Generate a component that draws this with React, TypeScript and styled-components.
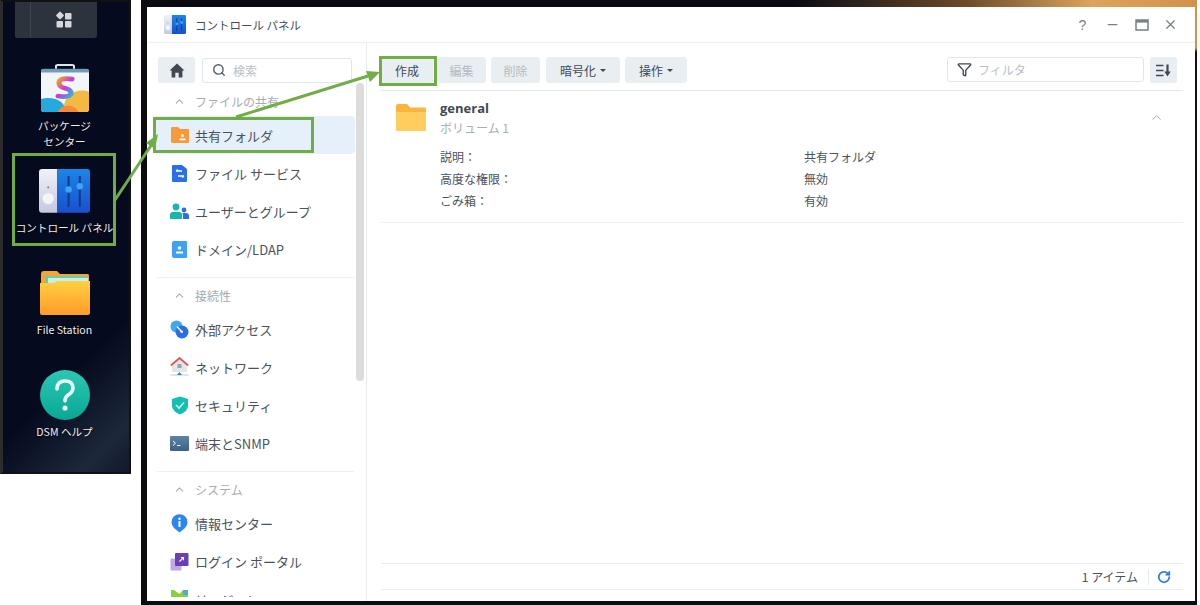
import React from 'react';
import styled, { createGlobalStyle } from 'styled-components';
import { ChevronUp, Search, Funnel, RotateCw, X, Minus } from 'lucide-react';

const GlobalStyle = createGlobalStyle`
  html, body { margin: 0; padding: 0; background: #fff; }
  body { font-family: "Noto Sans CJK JP", "Liberation Sans", sans-serif; }
  * { box-sizing: border-box; }
`;

const JP = `"Noto Sans CJK JP", "Liberation Sans", sans-serif`;

const Page = styled.div`
  position: relative;
  width: 1200px;
  height: 605px;
  overflow: hidden;
  display: flex;
  align-items: flex-start;
  gap: 10px;
  background: #fff;
  font-family: ${JP};
`;

/* left: the desktop crop */
const Desktop = styled.div`
  width: 131px;
  height: 474px;
  flex: none;
  border: 2px solid #111;
  border-left: 3px solid #2c2c2c;
  background:
    linear-gradient(135deg, transparent 74%, rgba(70, 95, 110, 0.35) 92%, rgba(60, 80, 95, 0.2) 100%),
    #060a1e;
  display: flex;
  flex-direction: column;
  align-items: center;
  padding-right: 3px;
`;
const Launcher = styled.div`
  width: 82px;
  height: 36px;
  flex: none;
  margin-right: 17px;
  background: #2d333c;
  border-radius: 0 0 3px 3px;
  display: flex;
  align-items: center;
  justify-content: center;
  padding-left: 16px;
  box-shadow: inset 15px 0 0 #2d333c, inset 16px 0 0 #3e454e;
`;
const DeskItem = styled.div<{ $h: number }>`
  height: ${(p) => p.$h}px;
  flex: none;
  width: 100%;
  display: flex;
  flex-direction: column;
  align-items: center;
`;
const DeskLabel = styled.div<{ $top: number }>`
  margin-top: ${(p) => p.$top}px;
  font-size: 10.6px;
  line-height: 16px;
  color: #f0f0f2;
  text-align: center;
  white-space: nowrap;
  text-shadow: 0 1px 2px #000;
`;

/* right: the window crop */
const Shot = styled.div`
  width: 1056px;
  flex: none;
  height: 605px;
  padding: 7px 2px 4px 6px;
  background:
    linear-gradient(90deg, #0a0a12 0%, #0a0a12 62%, #6b4a2a 78%, #dca45c 90%, #d0924c 100%) top / 100% 7px no-repeat,
    linear-gradient(180deg, #d0924c 0, #d0924c 48px, #14110f 52px, #0c0f1a 100%) right / 2px 100% no-repeat,
    #0b0b10;
`;
const Win = styled.div`
  width: 100%;
  height: 100%;
  background: #fff;
  display: flex;
  flex-direction: column;
  overflow: hidden;
`;
const TitleBar = styled.div`
  height: 36px;
  flex: none;
  border-bottom: 1px solid #edf0f4;
  display: flex;
  align-items: center;
  padding: 0 17px 0 17px;
`;
const Title = styled.div`
  margin-left: 9px;
  font-size: 11.5px;
  color: #414b55;
`;
const WinTools = styled.div`
  margin-left: auto;
  display: flex;
  align-items: center;
  gap: 14.5px;
  color: #75808c;
`;
const HelpMark = styled.span`
  width: 16px;
  text-align: center;
  font-size: 14px;
  line-height: 16px;
  font-family: "Liberation Sans", sans-serif;
  color: #75808c;
`;
const Body = styled.div`
  flex: 1;
  min-height: 0;
  display: flex;
`;

const Side = styled.div`
  position: relative;
  width: 220px;
  flex: none;
  border-right: 1px solid #e8edf3;
  padding: 14px 0 4px 7px;
  display: flex;
  flex-direction: column;
`;
const NavList = styled.div`
  flex: 1;
  min-height: 0;
  overflow: hidden;
`;
const SearchRow = styled.div`
  display: flex;
  align-items: center;
  gap: 7px;
  padding-left: 4px;
  margin-bottom: 4px;
`;
const SquareBtn = styled.div<{ $w: number }>`
  width: ${(p) => p.$w}px;
  height: 26px;
  flex: none;
  border-radius: 3px;
  background: #e9eef3;
  display: flex;
  align-items: center;
  justify-content: center;
  color: #3f4853;
`;
const InputBox = styled.div<{ $w: number }>`
  width: ${(p) => p.$w}px;
  height: 25px;
  flex: none;
  border: 1px solid #dfe6ee;
  border-radius: 3px;
  display: flex;
  align-items: center;
  gap: 7px;
  padding-left: 9px;
  font-size: 12px;
  color: #b9c0c8;
  background: #fff;
`;
const Scroll = styled.div`
  position: absolute;
  right: 2px;
  top: 40px;
  width: 8px;
  height: 298px;
  border-radius: 4px;
  background: #dcdcdc;
`;
const GroupHead = styled.div`
  height: 24px;
  display: flex;
  align-items: center;
  gap: 9px;
  padding-left: 19px;
  margin-top: 2px;
  margin-bottom: 3px;
  font-size: 12px;
  color: #a5acb4;
`;
const NavItem = styled.div<{ $active?: boolean }>`
  width: 201px;
  height: 38px;
  display: flex;
  align-items: center;
  gap: 5px;
  padding-left: 15px;
  border-radius: 4px;
  font-size: 13px;
  color: #49525c;
  white-space: nowrap;
  background: ${(p) => (p.$active ? '#e6f0fb' : 'transparent')};
`;
const NavDivider = styled.div`
  width: 197px;
  height: 1px;
  margin: 9px 0 5px 3px;
  background: #edf0f4;
`;

const Main = styled.div`
  flex: 1;
  min-width: 0;
  display: flex;
  flex-direction: column;
  padding: 14px 12px 11px 14px;
`;
const Toolbar = styled.div`
  height: 34px;
  flex: none;
  display: flex;
  align-items: flex-start;
  border-bottom: 1px solid #e3e8ee;
  padding-right: 6px;
`;
const ToolBtn = styled.div<{ $w: number; $off?: boolean; $gap?: number }>`
  width: ${(p) => p.$w}px;
  height: 26px;
  flex: none;
  margin-right: ${(p) => p.$gap ?? 5}px;
  border-radius: 3px;
  background: #e9eef3;
  display: flex;
  align-items: center;
  justify-content: center;
  gap: 4px;
  font-size: 12px;
  color: ${(p) => (p.$off ? '#b4bbc3' : '#3f4853')};
`;
const Caret = styled.span`
  width: 0;
  height: 0;
  border-left: 3px solid transparent;
  border-right: 3px solid transparent;
  border-top: 3px solid #3f4853;
`;
const Spacer = styled.div`
  flex: 1;
`;
const FilterBox = styled(InputBox)`
  margin-right: 6px;
  gap: 6px;
`;
const Entry = styled.div`
  position: relative;
  height: 132px;
  flex: none;
  border-bottom: 1px solid #edf0f4;
  padding: 13px 0 0 15px;
`;
const EntryHead = styled.div`
  display: flex;
  gap: 14px;
`;
const EntryText = styled.div`
  margin-top: -6px;
`;
const EntryName = styled.div`
  font-size: 13px;
  font-weight: 700;
  line-height: 20px;
  color: #3f4853;
  font-family: "Open Sans", ${JP};
`;
const EntrySub = styled.div`
  font-size: 12px;
  line-height: 20px;
  color: #a6adb5;
`;
const Collapse = styled.div`
  position: absolute;
  right: 19px;
  top: 19px;
  color: #a6adb5;
  display: flex;
`;
const Props = styled.div`
  margin: 7px 0 0 44px;
  display: grid;
  grid-template-columns: 364px 1fr;
  grid-auto-rows: 22px;
  align-items: center;
  font-size: 12px;
  color: #49525c;
`;
const Fill = styled.div`
  flex: 1;
`;
const Footer = styled.div`
  height: 27px;
  flex: none;
  border-top: 1px solid #e8edf3;
  border-bottom: 1px solid #e8edf3;
  display: flex;
  align-items: center;
  justify-content: flex-end;
  padding-right: 12px;
  font-size: 12px;
  color: #49525c;
`;
const FootSep = styled.div`
  width: 1px;
  height: 16px;
  margin: 0 8px 0 10px;
  background: #e3e8ee;
`;

/* annotations sitting on top of the screenshot */
const Callout = styled.div<{ $x: number; $y: number; $w: number; $h: number }>`
  position: absolute;
  left: ${(p) => p.$x}px;
  top: ${(p) => p.$y}px;
  width: ${(p) => p.$w}px;
  height: ${(p) => p.$h}px;
  border: 3px solid #70ad47;
  pointer-events: none;
`;
const ArrowLayer = styled.svg`
  position: absolute;
  left: 0;
  top: 0;
  pointer-events: none;
`;

/* drawn icons */
const GridIcon = () => (
  <svg width="18" height="18" viewBox="0 0 18 18">
    <rect x="2" y="1.5" width="6" height="6" rx="1" fill="#d5d7da" transform="rotate(45 5 4.5)" />
    <rect x="10" y="2" width="6.5" height="6.5" rx="1" fill="#d5d7da" />
    <rect x="1.5" y="10" width="6.5" height="6.5" rx="1" fill="#d5d7da" />
    <rect x="10" y="10" width="6.5" height="6.5" rx="1" fill="#d5d7da" />
  </svg>
);
const PackageIcon = () => (
  <svg width="50" height="49" viewBox="0 0 50 52" preserveAspectRatio="none">
    <defs>
      <clipPath id="pkgClip"><rect x="1" y="5" width="48" height="46" rx="3" /></clipPath>
      <linearGradient id="pkgS" x1="0" y1="0" x2="1" y2="1">
        <stop offset="0" stopColor="#f5a623" />
        <stop offset="0.5" stopColor="#c43dd6" />
        <stop offset="1" stopColor="#1fc4d8" />
      </linearGradient>
    </defs>
    <path d="M16 5 V2.5 Q16 1 18 1 H32 Q34 1 34 2.5 V5" fill="none" stroke="#dfe6ea" strokeWidth="2" />
    <g clipPath="url(#pkgClip)">
      <rect x="1" y="5" width="48" height="46" fill="#f2f6f8" />
      <rect x="1" y="5" width="48" height="4" fill="#6d9db8" />
      <circle cx="42" cy="46" r="18" fill="#f4b942" />
      <ellipse cx="8" cy="48" rx="17" ry="12" fill="#25a9df" />
      <circle cx="28" cy="55" r="11" fill="#f58a3c" />
    </g>
    <path d="M32 16 Q18 14 19 21 Q20 25 26 26 Q32 28 31 32 Q28 36 18 34" fill="none" stroke="url(#pkgS)" strokeWidth="5" strokeLinecap="round" />
  </svg>
);
const ControlIcon = ({ size }: { size: number }) => (
  <svg width={size} height={size * 0.86} viewBox="0 0 50 43">
    <defs>
      <linearGradient id={`cpL${size}`} x1="0" y1="0" x2="0" y2="1">
        <stop offset="0" stopColor="#f1f2f8" />
        <stop offset="1" stopColor="#c3c8e0" />
      </linearGradient>
      <linearGradient id={`cpR${size}`} x1="0" y1="0" x2="0" y2="1">
        <stop offset="0" stopColor="#1b86e8" />
        <stop offset="1" stopColor="#1a4fd0" />
      </linearGradient>
    </defs>
    <path d="M3 0 H18 V43 H3 Q0 43 0 40 V3 Q0 0 3 0 Z" fill={`url(#cpL${size})`} />
    <path d="M18 0 H47 Q50 0 50 3 V40 Q50 43 47 43 H18 Z" fill={`url(#cpR${size})`} />
    <circle cx="9" cy="18" r="1" fill="#7a8090" />
    <circle cx="9" cy="29" r="5.5" fill="#f4f4f6" />
    <rect x="28" y="7" width="2" height="30" fill="#123a80" />
    <rect x="39" y="7" width="2" height="30" fill="#123a80" />
    <circle cx="29" cy="20" r="3.2" fill="#3fa4f0" />
    <circle cx="40" cy="17" r="3.2" fill="#3fa4f0" />
  </svg>
);
const FileStationIcon = () => (
  <svg width="52" height="46" viewBox="0 0 52 46">
    <defs>
      <linearGradient id="fsFront" x1="0" y1="0" x2="0" y2="1">
        <stop offset="0" stopColor="#ffd040" />
        <stop offset="1" stopColor="#ff9a2a" />
      </linearGradient>
    </defs>
    <path d="M2 4 Q2 1 5 1 H18 L21 4 H49 Q50 4 50 6 V14 H2 Z" fill="#f7a531" />
    <rect x="6" y="6" width="42" height="10" fill="#63cdb8" />
    <rect x="9" y="8" width="40" height="9" fill="#cdeee4" />
    <path d="M1 13 H15 L18 11 H51 V43 Q51 45 49 45 H3 Q1 45 1 43 Z" fill="url(#fsFront)" />
  </svg>
);
const HelpIcon = () => (
  <svg width="50" height="50" viewBox="0 0 50 50">
    <defs>
      <linearGradient id="helpBg" x1="0" y1="0" x2="0" y2="1">
        <stop offset="0" stopColor="#2ac7b5" />
        <stop offset="1" stopColor="#0aa894" />
      </linearGradient>
    </defs>
    <circle cx="25" cy="25" r="25" fill="url(#helpBg)" />
    <path d="M17 19 Q17 11 25 11 Q33 11 33 18 Q33 22 28 25 Q25 27 25 31" fill="none" stroke="#e8fbf7" strokeWidth="3.6" strokeLinecap="round" />
    <circle cx="25" cy="38" r="2.6" fill="#e8fbf7" />
  </svg>
);
const HomeIcon = () => (
  <svg width="16" height="15" viewBox="0 0 16 15">
    <path d="M8 0.5 L0.5 7.5 H2.6 V14.5 H6.3 V9.8 H9.7 V14.5 H13.4 V7.5 H15.5 Z" fill="#3f4853" />
  </svg>
);
const SharedIcon = () => (
  <svg width="20" height="18" viewBox="0 0 20 18">
    <path d="M1 2 Q1 1 2 1 H8 L10 3 H18 Q19 3 19 4 V16 Q19 17 18 17 H2 Q1 17 1 16 Z" fill="#f99a3a" />
    <circle cx="12.5" cy="9.5" r="1.5" fill="#fff" />
    <rect x="9.5" y="12.5" width="6" height="1.8" rx="0.6" fill="#fff" />
  </svg>
);
const FileServiceIcon = () => (
  <svg width="18" height="19" viewBox="0 0 18 19">
    <path d="M2 1 H11 L16 5 V17 Q16 18 15 18 H2 Q1 18 1 17 V2 Q1 1 2 1 Z" fill="#2b6fe8" />
    <path d="M5 7 H11 M5 7 L7 5.5 M13 12 H7 M13 12 L11 13.5" stroke="#fff" strokeWidth="1.3" fill="none" />
  </svg>
);
const UsersIcon = () => (
  <svg width="19" height="17" viewBox="0 0 19 17">
    <circle cx="6" cy="4" r="3.4" fill="#16b7ae" />
    <path d="M0 16 V12 Q0 9 3 9 H9 Q12 9 12 12 V16 Z" fill="#16b7ae" />
    <circle cx="14" cy="7" r="2.4" fill="#2b6fe8" />
    <path d="M13 16 V12.5 Q13 11 11.8 10.4 Q12.5 10 14 10 H16 Q19 10 19 13 V16 Z" fill="#2b6fe8" />
  </svg>
);
const DomainIcon = () => (
  <svg width="18" height="19" viewBox="0 0 18 19">
    <path d="M3 1 H15 Q16 1 16 2 V17 Q16 18 15 18 H3 Q1 18 1 16 V3 Q1 1 3 1 Z" fill="#3da2f5" />
    <circle cx="8.5" cy="8" r="1.8" fill="#fff" />
    <rect x="5" y="11.5" width="7" height="2" rx="0.6" fill="#fff" />
  </svg>
);
const ExternalIcon = () => (
  <svg width="19" height="19" viewBox="0 0 19 19">
    <circle cx="6.5" cy="6.5" r="6" fill="#3da9f5" />
    <circle cx="12" cy="12" r="6.5" fill="#2b6fe8" />
    <path d="M7 6.5 L11.5 11.5" stroke="#fff" strokeWidth="1.4" />
    <circle cx="11.7" cy="11.7" r="1.3" fill="#fff" />
  </svg>
);
const NetworkIcon = () => (
  <svg width="19" height="20" viewBox="0 0 19 20">
    <path d="M2 8 L9.5 1.5 L17 8 V15 H2 Z" fill="#e3e6ea" />
    <path d="M0.8 8.5 L9.5 1 L18.2 8.5" fill="none" stroke="#e2574c" strokeWidth="1.8" />
    <rect x="7.5" y="7" width="4" height="4" fill="#9aa3ad" />
    <rect x="0.5" y="17.5" width="18" height="1" fill="#c3ccd6" />
    <path d="M7 18 L9.5 15 L12 18 Z" fill="#2b7ce8" />
  </svg>
);
const ShieldIcon = () => (
  <svg width="18" height="19" viewBox="0 0 18 19">
    <path d="M9 0.5 L17 3 V10 Q17 15 9 18.5 Q1 15 1 10 V3 Z" fill="#12bfb3" />
    <path d="M5 9 L8 12 L13 6.5" fill="none" stroke="#d8f7f3" strokeWidth="1.6" />
  </svg>
);
const TerminalIcon = () => (
  <svg width="19" height="15" viewBox="0 0 19 15">
    <defs>
      <linearGradient id="termBg" x1="0" y1="0" x2="0" y2="1">
        <stop offset="0" stopColor="#5e83a8" />
        <stop offset="1" stopColor="#3c5f86" />
      </linearGradient>
    </defs>
    <rect width="19" height="15" rx="1" fill="url(#termBg)" />
    <path d="M3 5 L5.5 7.2 L3 9.4" fill="none" stroke="#fff" strokeWidth="1" />
    <rect x="7" y="9" width="3.5" height="1" fill="#fff" />
  </svg>
);
const InfoIcon = () => (
  <svg width="17" height="19" viewBox="0 0 17 19">
    <path d="M8.5 18.5 L3 14 A8 8 0 1 1 14 14 Z" fill="#2b86f0" />
    <circle cx="8.5" cy="4.8" r="1.2" fill="#fff" />
    <rect x="7.5" y="7" width="2" height="6" fill="#fff" />
  </svg>
);
const LoginIcon = () => (
  <svg width="19" height="19" viewBox="0 0 19 19">
    <rect x="0.5" y="6.5" width="11" height="12" rx="1" fill="#c2a6ea" />
    <rect x="5" y="1" width="13.5" height="13" rx="1" fill="#6a3fb5" />
    <path d="M9.5 9.5 L13.5 5.5 M10.8 5.5 H13.5 V8.2" fill="none" stroke="#fff" strokeWidth="1.1" />
  </svg>
);
const CutoffIcon = () => (
  <svg width="17" height="18" viewBox="0 0 17 18">
    <rect width="17" height="18" fill="#8ccf3c" />
    <path d="M3 0 L8.5 4 L12 0 Z" fill="#fff" />
    <rect x="12" width="5" height="5" fill="#4aa8ee" />
  </svg>
);
const FolderIcon = () => (
  <svg width="30" height="27" viewBox="0 0 30 27">
    <path d="M0 2 Q0 0 2 0 H11 L14 3.5 H29 Q30 3.5 30 5 V9 H0 Z" fill="#fdb43c" />
    <path d="M0 8 H30 V26 Q30 27 29 27 H1 Q0 27 0 26 Z" fill="#ffcd5e" />
  </svg>
);
const SortIcon = () => (
  <svg width="15" height="13" viewBox="0 0 15 13">
    <path d="M0 1.5 H7.5 M0 6.5 H7.5 M0 11.5 H7.5" stroke="#3f4853" strokeWidth="1.6" />
    <path d="M11.5 0.5 V8" stroke="#3f4853" strokeWidth="2.2" />
    <path d="M8.3 7.5 H14.7 L11.5 12.5 Z" fill="#3f4853" />
  </svg>
);
const MaxIcon = () => (
  <svg width="14" height="12" viewBox="0 0 14 12">
    <rect x="1" y="1" width="12" height="10" fill="none" stroke="#75808c" strokeWidth="1.5" />
    <rect x="1" y="1" width="12" height="2.6" fill="#75808c" />
  </svg>
);

type Nav = { label: string; icon: React.ReactNode; active?: boolean };
type Group = { head: string; items: Nav[] };

const groups: Group[] = [
  {
    head: 'ファイルの共有',
    items: [
      { label: '共有フォルダ', icon: <SharedIcon />, active: true },
      { label: 'ファイル サービス', icon: <FileServiceIcon /> },
      { label: 'ユーザーとグループ', icon: <UsersIcon /> },
      { label: 'ドメイン/LDAP', icon: <DomainIcon /> },
    ],
  },
  {
    head: '接続性',
    items: [
      { label: '外部アクセス', icon: <ExternalIcon /> },
      { label: 'ネットワーク', icon: <NetworkIcon /> },
      { label: 'セキュリティ', icon: <ShieldIcon /> },
      { label: '端末とSNMP', icon: <TerminalIcon /> },
    ],
  },
  {
    head: 'システム',
    items: [
      { label: '情報センター', icon: <InfoIcon /> },
      { label: 'ログイン ポータル', icon: <LoginIcon /> },
      { label: 'リージョン', icon: <CutoffIcon /> },
    ],
  },
];

const IconSlot = styled.span`
  width: 21px;
  flex: none;
  display: flex;
  justify-content: center;
`;

const details = [
  ['説明：', '共有フォルダ'],
  ['高度な権限：', '無効'],
  ['ごみ箱：', '有効'],
];

export default function App() {
  return (
    <Page>
      <GlobalStyle />
      <Desktop>
        <Launcher><GridIcon /></Launcher>
        <DeskItem $h={26} />
        <DeskItem $h={105}>
          <PackageIcon />
          <DeskLabel $top={5}>パッケージ<br />センター</DeskLabel>
        </DeskItem>
        <DeskItem $h={101}>
          <ControlIcon size={51} />
          <DeskLabel $top={7}>コントロール パネル</DeskLabel>
        </DeskItem>
        <DeskItem $h={100}>
          <FileStationIcon />
          <DeskLabel $top={6}>File Station</DeskLabel>
        </DeskItem>
        <DeskItem $h={90}>
          <HelpIcon />
          <DeskLabel $top={4}>DSM ヘルプ</DeskLabel>
        </DeskItem>
      </Desktop>

      <Shot>
        <Win>
          <TitleBar>
            <ControlIcon size={22} />
            <Title>コントロール パネル</Title>
            <WinTools>
              <HelpMark>?</HelpMark>
              <Minus size={15} strokeWidth={2} />
              <MaxIcon />
              <X size={15} strokeWidth={2} />
            </WinTools>
          </TitleBar>
          <Body>
            <Side>
              <SearchRow>
                <SquareBtn $w={37}><HomeIcon /></SquareBtn>
                <InputBox $w={150}><Search size={14} color="#55606b" strokeWidth={2.4} />検索</InputBox>
              </SearchRow>
              <Scroll />
              <NavList>
                {groups.map((g, i) => (
                  <React.Fragment key={g.head}>
                    {i > 0 && <NavDivider />}
                    <GroupHead>
                      <ChevronUp size={13} color="#a5acb4" strokeWidth={2} />
                      {g.head}
                    </GroupHead>
                    {g.items.map((n) => (
                      <NavItem key={n.label} $active={n.active}>
                        <IconSlot>{n.icon}</IconSlot>
                        {n.label}
                      </NavItem>
                    ))}
                  </React.Fragment>
                ))}
              </NavList>
            </Side>
            <Main>
              <Toolbar>
                <ToolBtn $w={52} $gap={4}>作成</ToolBtn>
                <ToolBtn $w={49} $off>編集</ToolBtn>
                <ToolBtn $w={49} $off $gap={6}>削除</ToolBtn>
                <ToolBtn $w={74}>暗号化 <Caret /></ToolBtn>
                <ToolBtn $w={62}>操作 <Caret /></ToolBtn>
                <Spacer />
                <FilterBox $w={197}>
                  <Funnel size={15} color="#3f4853" strokeWidth={2.2} />
                  フィルタ
                </FilterBox>
                <SquareBtn $w={27}><SortIcon /></SquareBtn>
              </Toolbar>
              <Entry>
                <EntryHead>
                  <FolderIcon />
                  <EntryText>
                    <EntryName>general</EntryName>
                    <EntrySub>ボリューム 1</EntrySub>
                  </EntryText>
                </EntryHead>
                <Collapse><ChevronUp size={15} strokeWidth={1.6} /></Collapse>
                <Props>
                  {details.map(([k, v]) => (
                    <React.Fragment key={k}>
                      <span>{k}</span>
                      <span>{v}</span>
                    </React.Fragment>
                  ))}
                </Props>
              </Entry>
              <Fill />
              <Footer>
                1 アイテム
                <FootSep />
                <RotateCw size={14} color="#2b7ce8" strokeWidth={3} />
              </Footer>
            </Main>
          </Body>
        </Win>
      </Shot>

      <Callout $x={12} $y={153} $w={104} $h={93} />
      <Callout $x={153} $y={117} $w={161} $h={36} />
      <Callout $x={379} $y={56} $w={58} $h={30} />
      <ArrowLayer width="1200" height="605" viewBox="0 0 1200 605">
        <line x1="115" y1="200" x2="152" y2="144" stroke="#70ad47" strokeWidth="3" />
        <path d="M158 134 L155 149 L146 143 Z" fill="#70ad47" />
        <line x1="236" y1="117" x2="368" y2="76" stroke="#70ad47" strokeWidth="3" />
        <path d="M380 72 L370 82 L366 71 Z" fill="#70ad47" />
      </ArrowLayer>
    </Page>
  );
}
